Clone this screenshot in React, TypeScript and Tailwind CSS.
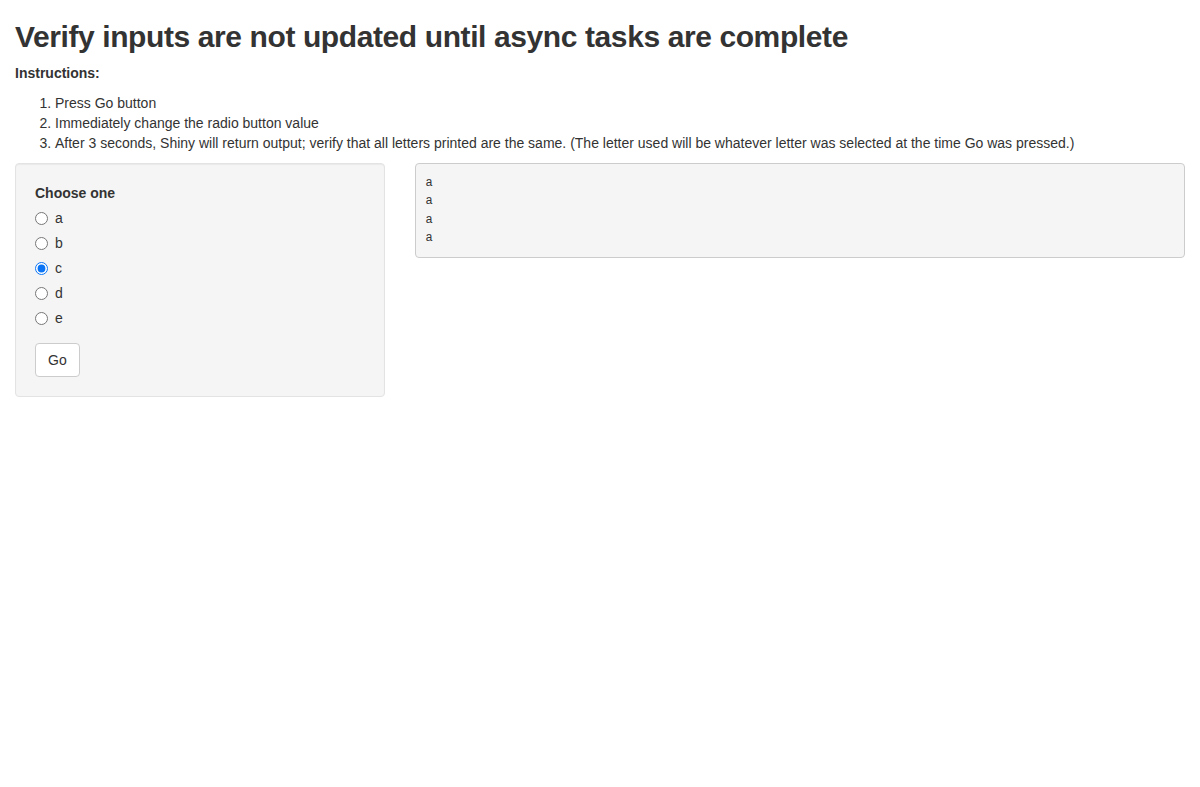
import React, { useState } from 'react';

const options = ['a', 'b', 'c', 'd', 'e'];

export default function App() {
  const [choice, setChoice] = useState('c');

  return (
    <div className="min-h-screen bg-white px-[15px] font-['Liberation_Sans',Arial,sans-serif] text-[14px] leading-[20px] text-[#333]">
      <h2 className="mt-5 mb-[10px] text-[30px] leading-[33px] font-bold tracking-[-0.4px]">
        Verify inputs are not updated until async tasks are complete
      </h2>
      <p className="mb-[10px] font-bold">Instructions:</p>
      <ol className="mb-[10px] list-decimal pl-10">
        <li>Press Go button</li>
        <li>Immediately change the radio button value</li>
        <li>
          After 3 seconds, Shiny will return output; verify that all letters printed are the same. (The letter used
          will be whatever letter was selected at the time Go was pressed.)
        </li>
      </ol>

      <div className="-mx-[15px] flex items-start">
        <div className="w-1/3 px-[15px]">
          <div className="rounded-[4px] border border-[#e3e3e3] bg-[#f5f5f5] p-[19px] shadow-[inset_0_1px_1px_rgba(0,0,0,0.05)]">
            <div className="mb-[15px]">
              <div className="mb-[5px] font-bold">Choose one</div>
              <div className="flex flex-col gap-[5px]">
                {options.map((o) => (
                  <label key={o} className="flex items-center gap-[7px]">
                    <input
                      type="radio"
                      name="choice"
                      checked={choice === o}
                      onChange={() => setChoice(o)}
                      className="m-0 h-[13px] w-[13px] accent-[#0a74f4]"
                    />
                    <span>{o}</span>
                  </label>
                ))}
              </div>
            </div>
            <button className="h-[34px] rounded-[4px] border border-[#ccc] bg-white px-3 text-[14px] text-[#333]">
              Go
            </button>
          </div>
        </div>
        <div className="w-2/3 px-[15px]">
          <pre className="mb-[10px] rounded-[4px] border border-[#ccc] bg-[#f5f5f5] p-[9.5px] font-['Liberation_Mono',Menlo,monospace] text-[12px] leading-[18.57px] text-[#333]">
{`a
a
a
a`}
          </pre>
        </div>
      </div>
    </div>
  );
}
